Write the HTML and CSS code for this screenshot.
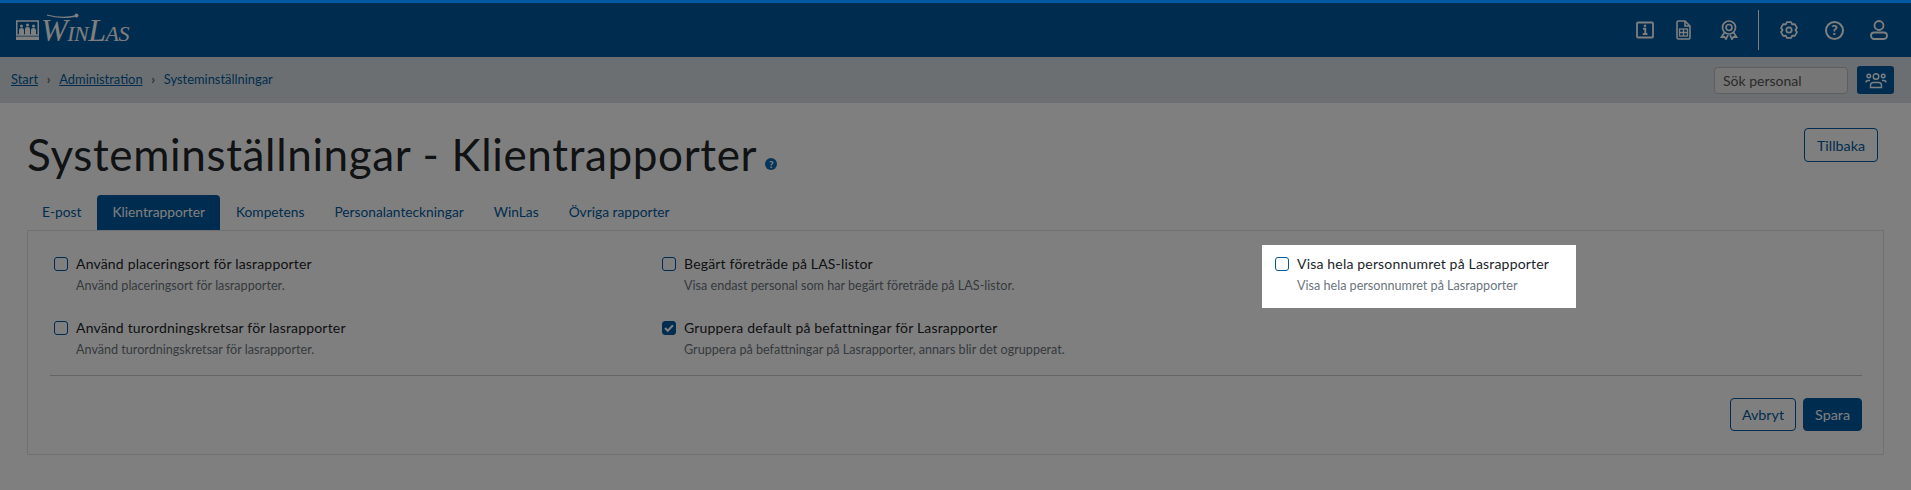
FILE: index.html
```html
<!DOCTYPE html>
<html lang="sv">
<head>
<meta charset="utf-8">
<title>Systeminställningar - Klientrapporter</title>
<link rel="stylesheet" href="styles.css">
</head>
<body>
<div class="strip"></div>
<header class="nav">
  <div class="logo">
    <svg class="logo-mark" width="23" height="21" viewBox="0 0 23 21" fill="none">
      <rect x="0.75" y="1" width="21.5" height="14" stroke="#fff" stroke-width="1.5"/>
      <rect x="0" y="16.5" width="23" height="3.5" fill="#fff"/>
      <g fill="#fff">
        <circle cx="5.5" cy="6" r="1.5"/><path d="M3 15v-5q0-2 2.500-2t2.500 2v5z"/>
        <circle cx="11.500" cy="5" r="1.500"/><path d="M9 15v-6q0-2 2.500-2t2.500 2v6z"/>
        <circle cx="17.500" cy="6" r="1.500"/><path d="M15 15v-5q0-2 2.500-2t2.500 2v5z"/>
      </g>
    </svg>
    <span class="logo-text">WinLas<svg class="swoosh" width="34" height="9" viewBox="0 0 34 9" fill="none"><path d="M1 3q14 4 29 1" stroke="#fff" stroke-width="1.300"/><circle cx="30.500" cy="3.500" r="2" fill="#fff"/></svg></span>
  </div>
  <div class="nav-icons">
    <svg class="ni ni-info" width="18" height="18" viewBox="0 0 18 18" fill="none" stroke="#fff" stroke-width="1.800"><rect x="1" y="1.500" width="16" height="15" rx="1"/><path d="M7 7.800h2.300v4.700M6.800 13h4.600" stroke-width="1.900"/><circle cx="9" cy="4.800" r="1.300" fill="#fff" stroke="none"/></svg>
    <svg class="ni ni-doc" width="15" height="20" viewBox="0 0 15 20" fill="none" stroke="#fff" stroke-width="1.600"><path d="M1 2.500a1.500 1.500 0 0 1 1.500-1.500H9l5 5v11.500a1.500 1.500 0 0 1-1.500 1.500h-10A1.500 1.500 0 0 1 1 17.500z"/><path d="M9 1v5h5"/><rect x="3.500" y="9" width="8" height="7" stroke-width="1.300"/><path d="M3.500 12.500h8M7.500 9v7" stroke-width="1.300"/></svg>
    <svg class="ni ni-award" width="18" height="20" viewBox="0 0 18 20" fill="none" stroke="#fff" stroke-width="1.700"><circle cx="9" cy="7.500" r="6.500"/><circle cx="9" cy="7.500" r="3"/><path d="M4.500 12.500 1.500 17l3-.2 1.500 2.400 2-4.200M13.500 12.500l3 4.500-3-.2-1.500 2.400-2-4.200"/></svg>
    <span class="divider"></span>
    <svg class="ni ni-gear" width="18" height="18" viewBox="0 0 24 24" fill="none" stroke="#fff" stroke-width="2.300" stroke-linejoin="round"><circle cx="12" cy="12" r="3.600"/><path d="M9.150 1.370h5.700l1.400 3.270 3.530-.420 2.850 4.930-2.130 2.850 2.130 2.850-2.850 4.930-3.530-.420-1.400 3.270h-5.700l-1.400-3.270-3.530.420-2.850-4.930L3.500 12 1.370 9.150l2.850-4.930 3.530.420z"/></svg>
    <span class="ni-help"><span class="q">?</span></span>
    <svg class="ni ni-user" width="18" height="20" viewBox="0 0 18 20" fill="none" stroke="#fff" stroke-width="1.800"><circle cx="9" cy="5.500" r="4.500"/><rect x="1" y="12.500" width="16" height="6.500" rx="3.200"/></svg>
  </div>
</header>
<div class="crumbbar">
  <nav class="crumbs">
    <a href="#">Start</a><span class="sep">›</span><a href="#">Administration</a><span class="sep">›</span><span>Systeminställningar</span>
  </nav>
  <div class="search">
    <input class="search-input" type="text" placeholder="Sök personal">
    <button class="search-btn" type="button" aria-label="Sök">
      <svg width="22" height="17" viewBox="0 0 22 17" fill="none" stroke="#fff" stroke-width="1.400"><circle cx="11" cy="4.500" r="2.800"/><circle cx="3.800" cy="4" r="1.800"/><circle cx="18.200" cy="4" r="1.800"/><path d="M5.500 15.500v-2q0-3 3-3h5q3 0 3 3v2zM1 10.500q0-2 2-2h2M21 10.500q0-2-2-2h-2"/></svg>
    </button>
  </div>
</div>
<main class="main">
  <div class="title-row">
    <h1 class="title">Systeminställningar - Klientrapporter<span class="hint">?</span></h1>
    <button class="btn btn-outline btn-back" type="button">Tillbaka</button>
  </div>
  <ul class="tabs">
    <li class="tab">E-post</li>
    <li class="tab active">Klientrapporter</li>
    <li class="tab">Kompetens</li>
    <li class="tab">Personalanteckningar</li>
    <li class="tab">WinLas</li>
    <li class="tab">Övriga rapporter</li>
  </ul>
  <section class="panel">
    <div class="options">
      <div class="option">
        <div class="option-label"><span class="box"></span>Använd placeringsort för lasrapporter</div>
        <div class="option-desc">Använd placeringsort för lasrapporter.</div>
      </div>
      <div class="option">
        <div class="option-label"><span class="box"></span>Begärt företräde på LAS-listor</div>
        <div class="option-desc">Visa endast personal som har begärt företräde på LAS-listor.</div>
      </div>
      <div class="option highlight">
        <div class="option-label"><span class="box"></span>Visa hela personnumret på Lasrapporter</div>
        <div class="option-desc">Visa hela personnumret på Lasrapporter</div>
      </div>
      <div class="option">
        <div class="option-label"><span class="box"></span>Använd turordningskretsar för lasrapporter</div>
        <div class="option-desc">Använd turordningskretsar för lasrapporter.</div>
      </div>
      <div class="option">
        <div class="option-label"><span class="box checked"><svg width="10" height="8" viewBox="0 0 10 8" fill="none" stroke="#fff" stroke-width="2"><path d="M1 4l2.800 2.800L9 1.200"/></svg></span>Gruppera default på befattningar för Lasrapporter</div>
        <div class="option-desc">Gruppera på befattningar på Lasrapporter, annars blir det ogrupperat.</div>
      </div>
    </div>
    <hr class="rule">
    <div class="actions">
      <button class="btn btn-outline" type="button">Avbryt</button>
      <button class="btn btn-solid" type="button">Spara</button>
    </div>
  </section>
</main>
</body>
</html>
```
FILE: styles.css
```css
* { box-sizing: border-box; }
html, body { height: 100%; }
body {
  margin: 0;
  overflow: hidden;
  background: #fff;
  color: #212529;
  font-family: Lato, "Liberation Sans", sans-serif;
  font-size: 14px;
}
.strip { position: relative; z-index: 3; height: 3px; background: #0059a3; }
.nav {
  height: 54px;
  background: #005a9e;
  display: flex;
  align-items: center;
  justify-content: space-between;
  padding-left: 16px;
}
.logo { display: flex; align-items: center; gap: 2px; margin-top: -1px; }
.logo-mark { flex: none; margin-top: 2px; }
.logo-text {
  position: relative;
  color: #fff;
  font-family: "Liberation Serif", serif;
  font-style: italic;
  font-variant: small-caps;
  font-size: 32px;
  line-height: 30px;
  letter-spacing: -0.5px;
}
.swoosh { position: absolute; left: 5px; top: -3px; }
.nav-icons { display: flex; align-items: center; height: 100%; }
.ni { flex: none; display: block; }
.ni-info { margin-right: 22px; }
.ni-doc { margin-right: 29px; }
.ni-award { margin-right: 20px; }
.divider { width: 1px; height: 40px; background: #fff; margin-right: 21px; }
.ni-gear { margin-right: 27px; }
.ni-help {
  width: 19px;
  height: 19px;
  border: 2px solid #fff;
  border-radius: 50%;
  margin-right: 26px;
  display: flex;
  align-items: center;
  justify-content: center;
  color: #fff;
}
.q { font-size: 14px; font-weight: 900; line-height: 1; }
.ni-user { margin-right: 23px; }

.crumbbar {
  height: 46px;
  background: #d8dfe2;
  display: flex;
  align-items: center;
  justify-content: space-between;
  padding: 0 17px 0 11px;
}
.crumbs { font-size: 12.9px; color: #005a9e; margin-top: -2px; }
.crumbs a { color: #005a9e; text-decoration: underline; }
.sep { margin: 0 8.7px; color: #666; font-weight: 900; }
.search { display: flex; align-items: center; gap: 9px; }
.search-input {
  width: 134px;
  height: 27px;
  padding: 0 8px;
  border: 1px solid #b8bcc0;
  border-radius: 4px;
  background: #eceded;
  font: 14px Lato, sans-serif;
}
.search-input::placeholder { color: #555; opacity: 1; }
.search-btn {
  width: 37px;
  height: 28px;
  padding: 0;
  border: 0;
  border-radius: 3px;
  background: #005a9e;
  display: flex;
  align-items: center;
  justify-content: center;
}

.main { padding: 0 27px; }
.title-row {
  height: 92px;
  padding: 25px 6px 0 0;
  display: flex;
  justify-content: space-between;
  align-items: flex-start;
}
.title {
  margin: 2px 0 0;
  font-size: 44px;
  font-weight: 400;
  line-height: 48px;
  letter-spacing: 0.65px;
  color: #212529;
}
.hint {
  display: inline-block;
  width: 12px;
  height: 12px;
  margin-left: 8px;
  border-radius: 50%;
  background: #0a6ab5;
  color: #fff;
  font-size: 10px;
  font-weight: 900;
  line-height: 12px;
  text-align: center;
  letter-spacing: 0;
  vertical-align: 3px;
}
.btn {
  height: 33px;
  padding: 0 11px;
  border-radius: 4px;
  font: 14.3px Lato, sans-serif;
}
.btn-outline { border: 1px solid #005a9e; background: #fff; color: #005a9e; }
.btn-solid { border: 1px solid #005a9e; background: #005a9e; color: #fff; }
.btn-back { width: 74px; height: 34px; padding: 0; }

.tabs { display: flex; list-style: none; margin: 0; padding: 0; height: 35px; font-size: 13.75px; }
.tab {
  height: 35px;
  padding: 0 15px;
  line-height: 34px;
  color: #005a9e;
  border-radius: 4px 4px 0 0;
}
.tab.active { background: #005a9e; color: #fff; margin: 0 1px; }

.panel {
  border: 1px solid #dee2e6;
  padding: 14px 21px 23px 22px;
}
.options {
  display: grid;
  grid-template-columns: 608px 613px 1fr;
  grid-template-rows: 63px 63px;
  row-gap: 1px;
  margin-left: -9px;
}
.option { padding: 11px 27px 0 13px; }
.option:nth-child(4) { grid-column: 1; }
.highlight {
  position: relative;
  z-index: 2;
  justify-self: start;
  background: #fff;
  box-shadow: 0 0 0 3000px rgba(0, 0, 0, .5);
}
.option-label { display: flex; align-items: center; font-size: 14px; line-height: 16px; letter-spacing: .18px; }
.box {
  width: 14px;
  height: 14px;
  margin-right: 8px;
  flex: none;
  border: 1px solid #005a9e;
  border-radius: 3px;
  background: #fff;
  display: flex;
  align-items: center;
  justify-content: center;
}
.box.checked { background: #005a9e; }
.option-desc { margin: 5px 0 0 22px; font-size: 12.6px; line-height: 17px; color: #6c757d; }
.rule { margin: 3px 0 0; border: 0; border-top: 1px solid #c4c8cc; }
.actions { display: flex; justify-content: flex-end; gap: 7px; margin-top: 22px; }
```
